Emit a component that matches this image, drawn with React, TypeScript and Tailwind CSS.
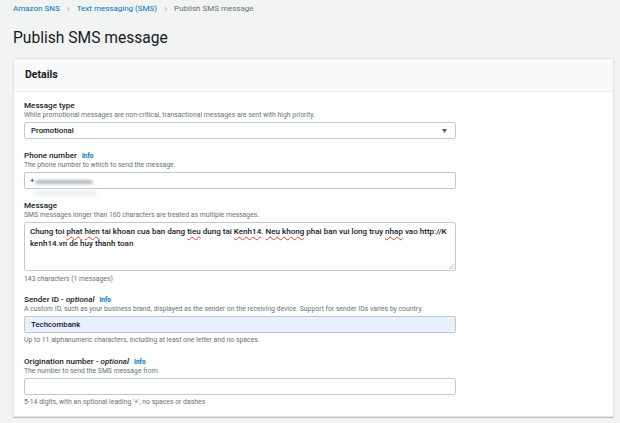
import React from 'react';

const font = { fontFamily: 'Roboto, "Liberation Sans", sans-serif' };

const Info = () => (
  <span className="ml-[5px] text-[6.5px] font-bold text-[#0073bb]">Info</span>
);

const Label: React.FC<{ children: React.ReactNode }> = ({ children }) => (
  <div className="h-[12px] text-[8.1px] leading-[12px] font-medium text-[#16191f] whitespace-nowrap">{children}</div>
);

const Desc: React.FC<{ children: React.ReactNode }> = ({ children }) => (
  <div className="h-[8px] text-[6.85px] leading-[8px] text-[#687078] whitespace-nowrap">{children}</div>
);

const Hint: React.FC<{ children: React.ReactNode; className?: string }> = ({ children, className }) => (
  <div className={`h-[10px] text-[6.85px] leading-[10px] text-[#687078] whitespace-nowrap ${className ?? ''}`}>{children}</div>
);

const Wavy: React.FC<{ children: React.ReactNode }> = ({ children }) => (
  <span className="underline decoration-wavy decoration-[#e0403a] decoration-[0.5px] underline-offset-[2px]">{children}</span>
);

export default function App() {
  return (
    <div className="w-[620px] h-[423px] overflow-hidden bg-[#f2f3f3] pl-[13px]" style={font}>
      {/* breadcrumb */}
      <div className="pt-[4px] h-[14px] flex items-center gap-[7px] text-[8px] leading-[10px]">
        <span className="text-[#0073bb]">Amazon SNS</span>
        <span className="text-[#aab7b8] text-[10px] leading-[10px]">›</span>
        <span className="text-[#0073bb]">Text messaging (SMS)</span>
        <span className="text-[#aab7b8] text-[10px] leading-[10px]">›</span>
        <span className="text-[#687078]">Publish SMS message</span>
      </div>

      {/* title */}
      <h1 className="mt-[13px] h-[22px] text-[15.6px] leading-[22px] text-[#16191f]">Publish SMS message</h1>

      {/* card */}
      <div className="mt-[9px] w-[601px] bg-white border border-[#e3e5e6] shadow-[0_1px_1px_rgba(0,28,36,0.25)] rounded-[1px]">
        <div className="h-[33px] bg-[#fafafa] border-b border-[#eaeded] flex items-center pl-[11px]">
          <span className="text-[10.5px] font-bold text-[#16191f]">Details</span>
        </div>

        <div className="pl-[10px] pt-[7px] pb-[9px]">
          {/* Message type */}
          <Label>Message type</Label>
          <Desc>While promotional messages are non-critical, transactional messages are sent with high priority.</Desc>
          <div className="mt-[3px] w-[432px] h-[17px] border border-[#c3c9ca] rounded-[2px] flex items-center justify-between pl-[6px] pr-[8px]">
            <span className="text-[7.8px] font-medium text-[#16191f]">Promotional</span>
            <svg width="5" height="4" viewBox="0 0 5 4"><path d="M0 0h5L2.5 4z" fill="#545b64" /></svg>
          </div>

          {/* Phone number */}
          <div className="mt-[10px]">
            <Label>Phone number<Info /></Label>
            <Desc>The phone number to which to send the message.</Desc>
            <div className="mt-[3px] w-[432px] h-[17px] border border-[#c3c9ca] rounded-[2px] flex items-center pl-[5px] relative">
              <span className="text-[7.8px] text-[#16191f]">+</span>
              <span className="ml-[1px] mt-[3px] w-[58px] h-[4px] bg-[#b3b8bd] blur-[1.5px] rounded-full" />
              <span className="absolute left-[8px] top-[19px] w-[64px] h-[3px] bg-[#e3e5e7] blur-[2px] rounded-full" />
            </div>
          </div>

          {/* Message */}
          <div className="mt-[10px]">
            <Label>Message</Label>
            <Desc>SMS messages longer than 160 characters are treated as multiple messages.</Desc>
            <div className="mt-[3px] w-[432px] h-[49px] border border-[#c3c9ca] rounded-[2px] px-[5px] pt-[3px] relative text-[8.05px] leading-[12px] font-medium text-[#16191f]">
              <div className="whitespace-nowrap">
                Chung toi <Wavy>phat</Wavy> <Wavy>hien</Wavy> tai khoan cua ban dang <Wavy>tieu</Wavy> dung tai <Wavy>Kenh14</Wavy>. <Wavy>Neu khong</Wavy> phai ban vui long truy <Wavy>nhap</Wavy> vao http://K
              </div>
              <div>kenh14.vn de huy thanh toan</div>
              <svg className="absolute right-[1px] bottom-[1px]" width="6" height="6" viewBox="0 0 6 6">
                <path d="M1 6L6 1M3.5 6L6 3.5" stroke="#9aa0a6" strokeWidth="0.7" />
              </svg>
            </div>
            <Hint className="mt-[3px]">143 characters (1 messages)</Hint>
          </div>

          {/* Sender ID */}
          <div className="mt-[9px]">
            <Label>Sender ID - <i>optional</i><Info /></Label>
            <Desc>A custom ID, such as your business brand, displayed as the sender on the receiving device. Support for sender IDs varies by country.</Desc>
            <div className="mt-[3px] w-[432px] h-[17px] border border-[#c3c9ca] bg-[#e8f0fe] rounded-[2px] flex items-center pl-[6px]">
              <span className="text-[7.8px] font-medium text-[#16191f]">Techcombank</span>
            </div>
            <Hint className="mt-[2px]">Up to 11 alphanumeric characters, including at least one letter and no spaces.</Hint>
          </div>

          {/* Origination number */}
          <div className="mt-[10px]">
            <Label>Origination number - <i>optional</i><Info /></Label>
            <Desc>The number to send the SMS message from.</Desc>
            <div className="mt-[3px] w-[432px] h-[17px] border border-[#c3c9ca] rounded-[2px]" />
            <Hint className="mt-[2px]">5-14 digits, with an optional leading '+', no spaces or dashes</Hint>
          </div>
        </div>
      </div>
    </div>
  );
}
